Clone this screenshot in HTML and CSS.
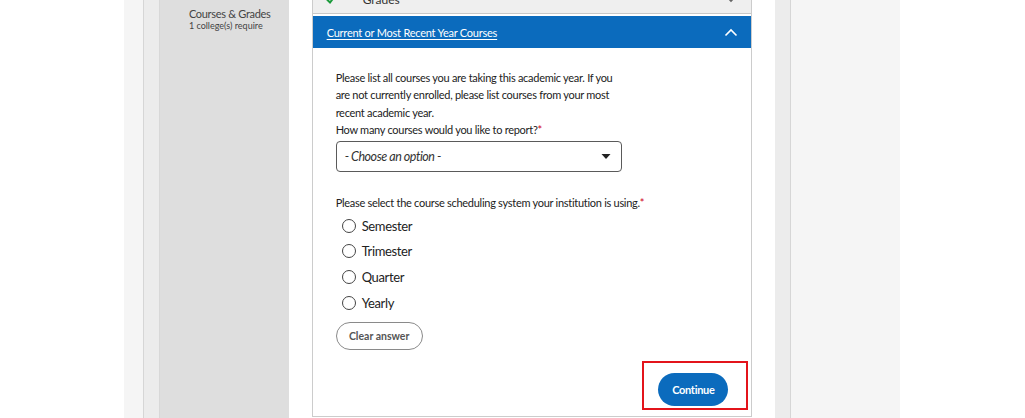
FILE: index.html
```html
<!DOCTYPE html>
<html lang="en">
<head>
<meta charset="utf-8">
<title>Courses &amp; Grades</title>
<link rel="stylesheet" href="styles.css">
</head>
<body>
<div class="page">
  <div class="gutter-left"></div>
  <div class="rail rail-left"></div>
  <aside class="sidebar">
    <div class="side-item">
      <div class="side-title">Courses &amp; Grades</div>
      <div class="side-sub">1 college(s) require</div>
    </div>
  </aside>
  <main class="main">
    <div class="card">
      <div class="row-prev">
        <svg class="check" width="12" height="12" viewBox="0 0 12 12"><path d="M2 6.5 L5 9.5 L10 3" fill="none" stroke="#1a9a3a" stroke-width="2"/></svg>
        <span class="prev-label">Grades</span>
        <svg class="chev-down" width="12" height="8" viewBox="0 0 12 8"><path d="M1 1 L6 6 L11 1" fill="none" stroke="#666" stroke-width="1.6"/></svg>
      </div>
      <div class="section-head">
        <a class="section-title" href="#">Current or Most Recent Year Courses</a>
        <svg class="chev-up" width="14" height="9" viewBox="0 0 14 9"><path d="M1.5 7.5 L7 2 L12.5 7.5" fill="none" stroke="#fff" stroke-width="1.6"/></svg>
      </div>
      <div class="section-body">
        <p class="intro">Please list all courses you are taking this academic year. If you are not currently enrolled, please list courses from your most recent academic year.</p>
        <p class="q">How many courses would you like to report?<span class="req">*</span></p>
        <div class="select">
          <span class="placeholder">- Choose an option -</span>
          <svg class="caret" width="10" height="6" viewBox="0 0 10 6"><path d="M0.5 0 H9.5 L5 5 Z" fill="#222"/></svg>
        </div>
        <p class="q q2">Please select the course scheduling system your institution is using.<span class="req">*</span></p>
        <ul class="radios">
          <li class="radio"><span class="dot"></span><span class="rlabel">Semester</span></li>
          <li class="radio"><span class="dot"></span><span class="rlabel">Trimester</span></li>
          <li class="radio"><span class="dot"></span><span class="rlabel">Quarter</span></li>
          <li class="radio"><span class="dot"></span><span class="rlabel">Yearly</span></li>
        </ul>
        <button class="clear" type="button">Clear answer</button>
        <div class="actions">
          <div class="cta-wrap">
            <button class="continue" type="button">Continue</button>
            <span class="highlight"></span>
          </div>
        </div>
      </div>
    </div>
  </main>
  <div class="rail rail-right"></div>
  <div class="gutter-right"></div>
</div>
</body>
</html>
```

FILE: styles.css
```css
html, body {
  margin: 0;
  padding: 0;
  background: #ffffff;
  height: 100%;
  overflow: hidden;
}
body {
  font-family: Lato, "Liberation Sans", sans-serif;
  color: #222;
}
.page {
  display: flex;
  width: 776px;
  margin: -19px 0 0 124px;
  min-height: 460px;
}
.gutter-left {
  width: 19px;
  background: #f5f5f5;
  border-right: 1px solid #d6d6d6;
}
.rail {
  width: 15px;
  background: #ececec;
}
.rail-left {
  border-right: 1px solid #d8d8d8;
}
.sidebar {
  width: 129px;
  background: #dedede;
  padding: 26px 0 0 29px;
  box-sizing: border-box;
}
.side-title {
  font-size: 11px;
  line-height: 14px;
  letter-spacing: -0.3px;
  color: #444;
}
.side-sub {
  font-size: 9px;
  line-height: 10px;
  color: #444;
}
.main {
  width: 488px;
  padding: 0 23px;
  box-sizing: border-box;
}
.card {
  border: 1px solid #cccccc;
  border-top: none;
  background: #fff;
}
.row-prev {
  height: 32px;
  background: #efefef;
  border-bottom: 1px solid #c8c8c8;
  display: flex;
  align-items: center;
  padding: 0 14px 0 12px;
  margin-bottom: 2px;
  font-size: 12px;
  color: #333;
}
.check { margin-right: 26px; margin-top: 4px; }
.prev-label { flex: 1; margin-top: 4px; }
.chev-down { margin-top: 4px; }
.section-head {
  height: 32px;
  background: #0b6bbd;
  display: flex;
  align-items: center;
  justify-content: space-between;
  padding: 0 13px 0 14px;
}
.section-title {
  color: #fff;
  font-size: 11px;
  letter-spacing: -0.23px;
  text-decoration: underline;
  text-underline-offset: 2px;
}
.chev-up { display: block; }
.section-body {
  padding: 21px 23px 10px 23px;
}
.intro, .q {
  margin: 0;
  font-size: 11px;
  line-height: 17.3px;
  letter-spacing: -0.28px;
  color: #222;
  max-width: 286px;
}
.q2 { max-width: none; margin-top: 22px; }
.req { color: #d0021b; }
.select {
  margin-top: 3px;
  width: 286px;
  height: 31px;
  box-sizing: border-box;
  border: 1px solid #5a5a5a;
  border-radius: 4px;
  display: flex;
  align-items: center;
  justify-content: space-between;
  padding: 0 10px 0 8px;
}
.placeholder {
  font-style: italic;
  font-size: 12.5px;
  letter-spacing: -0.45px;
  color: #333;
}
.caret { display: block; }
.radios {
  list-style: none;
  margin: 1.5px 0 0 0;
  padding: 0;
}
.radio {
  height: 25.67px;
  display: flex;
  align-items: center;
  padding-left: 6px;
}
.dot {
  width: 14px;
  height: 14px;
  box-sizing: border-box;
  border: 1.5px solid #444;
  border-radius: 50%;
  margin-right: 6px;
}
.rlabel {
  font-size: 13px;
  letter-spacing: -0.35px;
  color: #222;
}
.clear {
  margin-top: 6px;
  height: 28px;
  width: 87px;
  border: 1px solid #8a8a8a;
  border-radius: 14px;
  background: #fff;
  font-family: inherit;
  font-size: 10.5px;
  font-weight: 700;
  color: #555;
  padding: 0;
}
.actions {
  display: flex;
  justify-content: flex-end;
  margin-top: 23px;
}
.cta-wrap {
  position: relative;
}
.continue {
  display: block;
  width: 70px;
  height: 33px;
  border: none;
  border-radius: 17px;
  background: #0b6bbd;
  color: #fff;
  font-family: inherit;
  font-size: 11px;
  font-weight: 700;
  letter-spacing: -0.3px;
  padding: 0;
}
.highlight {
  position: absolute;
  left: -16px;
  top: -12px;
  right: -20px;
  bottom: -4px;
  border: 2px solid #e3141b;
}
.gutter-right {
  width: 109px;
  background: #f5f5f5;
  border-left: 1px solid #d6d6d6;
}
```
